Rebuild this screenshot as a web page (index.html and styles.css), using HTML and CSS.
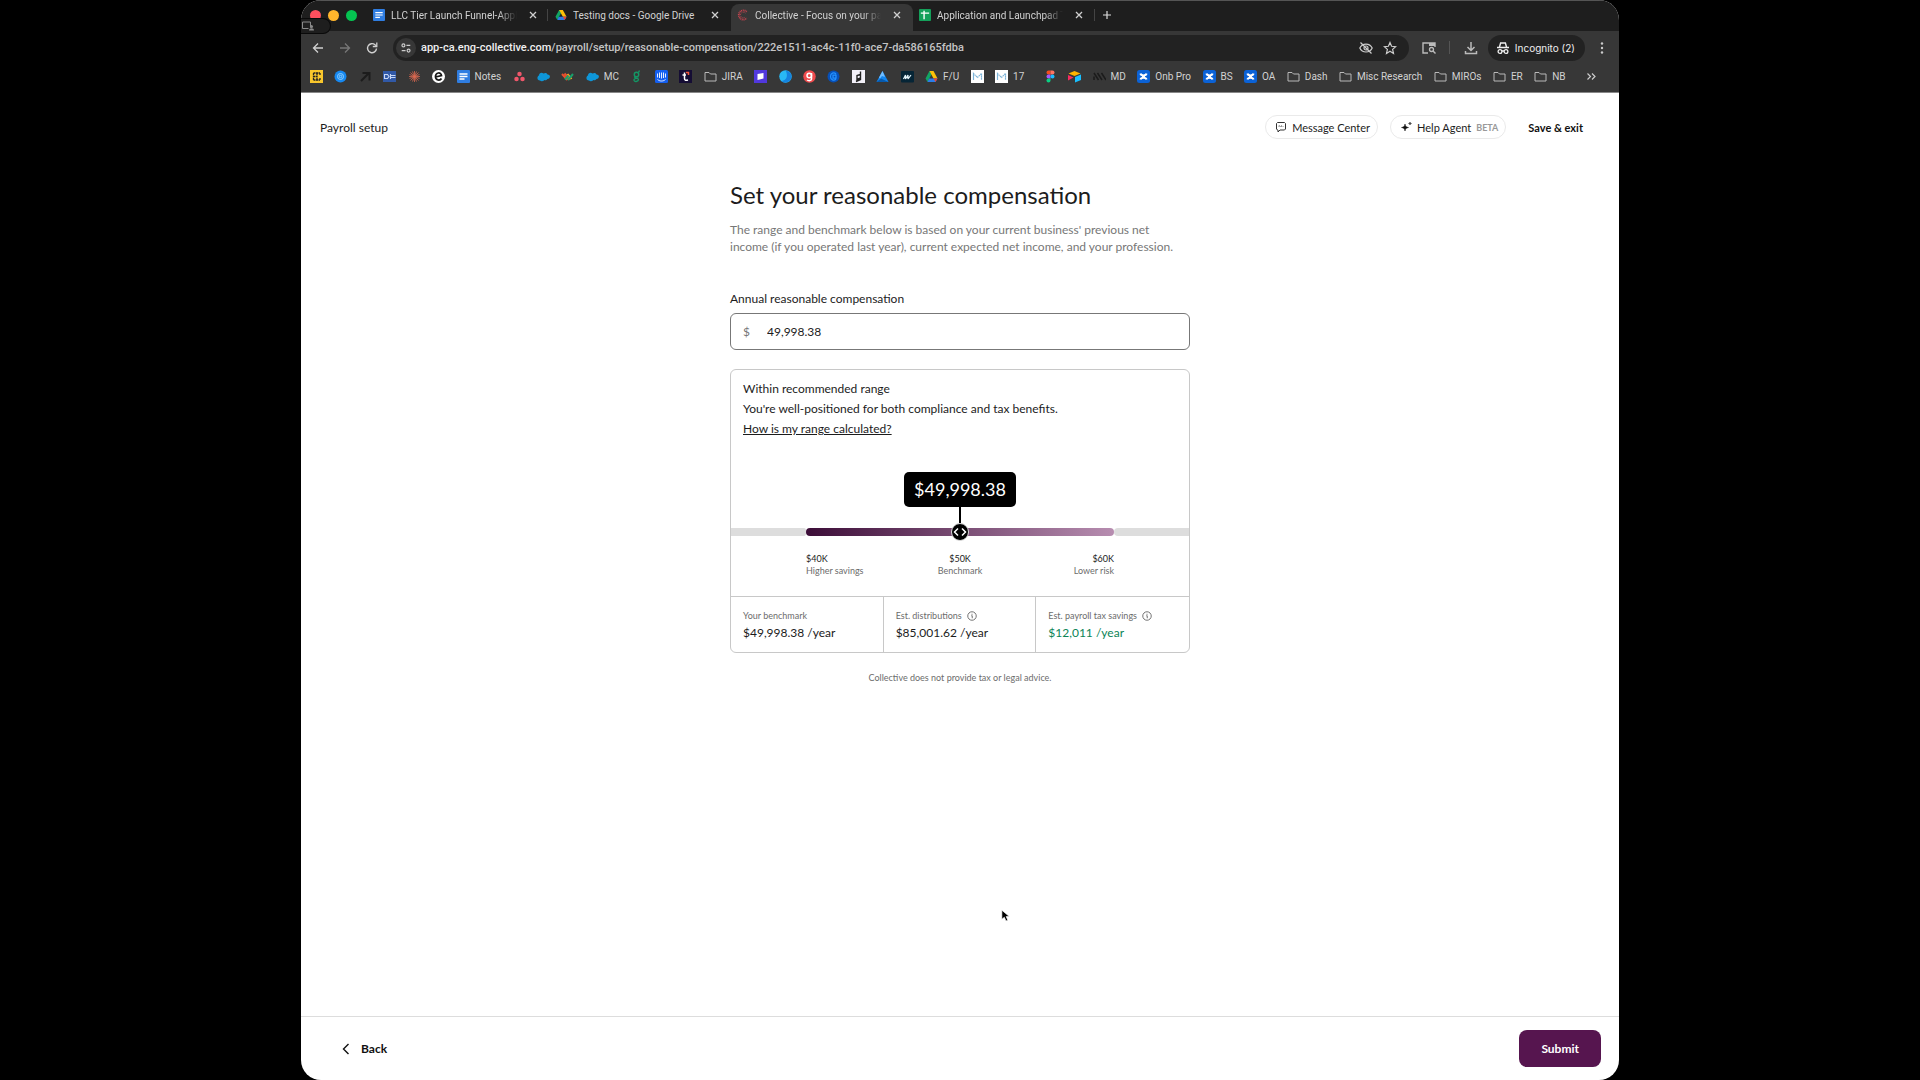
FILE: index.html
```html
<!DOCTYPE html>
<html lang="en">
<head>
  <meta charset="UTF-8" />
  <meta name="viewport" content="width=device-width, initial-scale=1.0" />
  <title>Collective - Focus on your passion</title>
  <link rel="stylesheet" href="styles.css">
</head>
<body>
  <!-- shared icons -->
  <svg class="sprite" aria-hidden="true">
    <symbol id="doc" viewBox="0 0 26 26"><rect width="26" height="26" rx="2" fill="#2f7de1"/><path d="M5 8h16M5 13h16M5 18h10" stroke="#fff" stroke-width="2.6"/></symbol>
    <symbol id="drive" viewBox="0 0 26 26"><path d="M9 2h8L9 16l-4 8-4-7z" fill="#12a463"/><path d="M9 2h8l8 15h-8z" fill="#ffc107"/><path d="M8 17h17l-4 7H5z" fill="#2b7de9"/><path d="M25 17l-4 7-4-7z" fill="#ea4335"/></symbol>
    <symbol id="close" viewBox="0 0 10 10"><path d="M2 2l6 6M8 2l-6 6" stroke="#d0d0d0" stroke-width="1.3"/></symbol>
    <symbol id="folder" viewBox="0 0 26 26"><path d="M2 22V5h8l3 3h11v14z" fill="none" stroke="#b9b9b9" stroke-width="2"/></symbol>
    <symbol id="cloud" viewBox="0 0 26 26"><path d="M6 21c-7 0-6-9-2-10 0-6 6-7 9-4 4-2 7-1 8 2 7 0 6 9 0 9-2 3-5 3-6 2-3 3-7 3-9 1z" fill="#0e96d8"/></symbol>
    <symbol id="miro" viewBox="0 0 26 26"><rect width="26" height="26" fill="#fff"/><path d="M5 20V7l8 8 8-8v13M5 7v13M21 7v13" fill="none" stroke="#7db4d8" stroke-width="2.4" stroke-dasharray="3 1"/></symbol>
    <symbol id="confl" viewBox="0 0 26 26"><rect width="26" height="26" rx="5" fill="#0b62d6"/><path d="M7 7c1 5 11 5 12 0M7 19c1-5 11-5 12 0" fill="none" stroke="#fff" stroke-width="4"/><path d="M10 10h6v6h-6z" fill="#fff"/></symbol>
    <symbol id="info" viewBox="0 0 20 20"><circle cx="10" cy="10" r="8.5" fill="none" stroke="#5c5c5c" stroke-width="1.7"/><path d="M8.500 9.500h2v5M10 5.500v2" fill="none" stroke="#5c5c5c" stroke-width="1.7"/></symbol>
  </svg>

  <div class="window">
    <div class="tab-strip">
      <div class="lights"><i class="red"></i><i class="yellow"></i><i class="green"></i></div>
      <div class="tab">
        <svg><use href="#doc"/></svg><span>LLC Tier Launch Funnel-Appli</span>
        <button aria-label="Close tab"><svg><use href="#close"/></svg></button>
      </div>
      <div class="tab first">
        <svg><use href="#drive"/></svg><span>Testing docs - Google Drive</span>
        <button aria-label="Close tab"><svg><use href="#close"/></svg></button>
      </div>
      <div class="tab active">
        <svg viewBox="0 0 26 26"><path d="M21 6a10 10 0 1 0 0 14" fill="none" stroke="#c5444f" stroke-width="4" stroke-dasharray="2 1.500"/><path d="M18 9a6 6 0 1 0 0 8" fill="none" stroke="#c5444f" stroke-width="2" stroke-dasharray="2 2"/></svg><span>Collective - Focus on your pas</span>
        <button aria-label="Close tab"><svg><use href="#close"/></svg></button>
      </div>
      <div class="tab last">
        <svg viewBox="0 0 26 26"><rect width="26" height="26" rx="2" fill="#14a05a"/><path d="M4 9h18M11 4v18" stroke="#fff" stroke-width="3"/></svg><span>Application and Launchpad Te</span>
        <button aria-label="Close tab"><svg><use href="#close"/></svg></button>
      </div>
      <button class="new-tab" aria-label="New tab"><svg viewBox="0 0 10 10"><path d="M5 1v8M1 5h8" stroke="#ddd" stroke-width="1.2"/></svg></button>
      <div class="share-pill">
        <svg viewBox="0 0 24 20"><path d="M1 2h16v11M1 2v13h12" fill="none" stroke="#8a8a8a" stroke-width="2"/><circle cx="19" cy="11" r="3" fill="#8a8a8a"/><path d="M14 19c0-6 10-6 10 0z" fill="#8a8a8a"/></svg>
      </div>
    </div>

    <div class="toolbar">
      <button aria-label="Back"><svg viewBox="0 0 14 14"><path d="M12 7H2.500M7 2.500L2.500 7 7 11.500" fill="none" stroke="#d0d0d0" stroke-width="1.300"/></svg></button>
      <button aria-label="Forward"><svg viewBox="0 0 14 14"><path d="M2 7h9.500M7 2.500L11.500 7 7 11.500" fill="none" stroke="#777" stroke-width="1.300"/></svg></button>
      <button aria-label="Reload"><svg viewBox="0 0 14 14"><path d="M11.500 7.500A4.500 4.500 0 1 1 10 3.800l1.500 1.200" fill="none" stroke="#d0d0d0" stroke-width="1.400"/><path d="M11.800 1.500v4H7.800" fill="none" stroke="#d0d0d0" stroke-width="1.300"/></svg></button>
      <div class="address">
        <button class="site-info" aria-label="Site information"><svg viewBox="0 0 14 14"><g fill="none" stroke="#ccc" stroke-width="1.400"><circle cx="4" cy="4" r="1.700"/><path d="M7.500 4H12M2 10h4.500"/><circle cx="10" cy="10" r="1.700"/></g></svg></button>
        <a class="url" href="#"><b>app-ca.eng-collective.com</b>/payroll/setup/reasonable-compensation/222e1511-ac4c-11f0-ace7-da586165fdba</a>
        <button aria-label="Tracking protection"><svg viewBox="0 0 14 14"><g fill="none" stroke="#ccc" stroke-width="1.200"><path d="M.800 7c2.500-5.300 9.900-5.300 12.400 0-2.500 5.300-9.900 5.300-12.400 0z"/><circle cx="7" cy="7" r="2"/><path d="M1.500 1.500l11 11"/></g></svg></button>
        <button aria-label="Bookmark"><svg viewBox="0 0 14 14"><path d="M7 1.500l1.600 3.800 4 .4-3 2.700.9 4L7 10.300l-3.500 2.100.9-4-3-2.700 4-.4z" fill="none" stroke="#ccc" stroke-width="1.200"/></svg></button>
      </div>
      <button class="panel-btn" aria-label="Search panel"><svg viewBox="0 0 14 14"><path d="M6 12H1V2h12v4" fill="none" stroke="#bbb" stroke-width="1.400"/><path d="M7 2h6v3H7z" fill="#bbb"/><circle cx="9.500" cy="8.500" r="2" fill="none" stroke="#bbb" stroke-width="1.300"/><path d="M11 10l2.500 2.500" stroke="#bbb" stroke-width="1.400"/></svg></button>
      <i class="divider"></i>
      <button aria-label="Downloads"><svg viewBox="0 0 14 14"><path d="M7 1v8M3.500 6L7 9.500 10.500 6M1.500 10v2.500h11V10" fill="none" stroke="#bbb" stroke-width="1.500"/></svg></button>
      <button class="incognito"><svg viewBox="0 0 14 14"><path d="M3.500 6L4.600 2h4.800l1.100 4M1 6.500h12" fill="none" stroke="#eee" stroke-width="1.400"/><g fill="none" stroke="#eee" stroke-width="1.300"><circle cx="4" cy="10.500" r="1.900"/><circle cx="10" cy="10.500" r="1.900"/><path d="M6 10h2"/></g></svg>Incognito (2)</button>
      <button class="menu" aria-label="Menu"><svg viewBox="0 0 14 14"><g fill="#ccc"><circle cx="7" cy="2.500" r="1.200"/><circle cx="7" cy="7" r="1.200"/><circle cx="7" cy="11.500" r="1.200"/></g></svg></button>
    </div>

    <nav class="bookmarks">
      <a href="#" aria-label="Bookmark"><svg viewBox="0 0 26 26"><rect width="26" height="26" fill="#f8c62c"/><path d="M7 6h13M7 20h13M7 6v14M14 6v14M7 13h8M20 6v4M20 16v4" stroke="#222" stroke-width="2.600" stroke-dasharray="4 1"/></svg></a>
      <a href="#" aria-label="Bookmark"><svg viewBox="0 0 26 26"><circle cx="13" cy="13" r="12" fill="#1688f0"/><g fill="none" stroke="#8fd0ff" stroke-width="2"><circle cx="13" cy="13" r="6"/><circle cx="13" cy="13" r="2.500"/></g></svg></a>
      <a href="#" aria-label="Bookmark"><svg viewBox="0 0 26 26"><path d="M4 22L20 6M7 6h14v15" fill="none" stroke="#1c1c1c" stroke-width="4"/></svg></a>
      <a href="#" aria-label="Bookmark"><svg viewBox="0 0 26 26"><rect y="2" width="26" height="22" fill="#3159a7"/><path d="M3 9h6l3 4-3 4H3zM15 8v10M15 11h10M15 15h10" fill="none" stroke="#c7d7f5" stroke-width="2.200"/></svg></a>
      <a href="#" aria-label="Bookmark"><svg viewBox="0 0 26 26"><path d="M13 2v22M2 13h22M5 5l16 16M21 5L5 21M9 3l8 20M17 3L9 23M3 9l20 8M3 17l20-8" stroke="#df6a50" stroke-width="1.500"/></svg></a>
      <a href="#" aria-label="Bookmark"><svg viewBox="0 0 26 26"><circle cx="13" cy="13" r="13" fill="#fff"/><path d="M7 14l12-3c-1-8-12-6-12 2s9 9 12 4" fill="none" stroke="#171717" stroke-width="3.500"/></svg></a>
      <a href="#"><svg><use href="#doc"/></svg>Notes</a>
      <a href="#" aria-label="Bookmark"><svg viewBox="0 0 26 26"><g fill="#f0576b"><circle cx="13" cy="8" r="4.500"/><circle cx="7" cy="18" r="4.500"/><circle cx="19" cy="18" r="4.500"/></g></svg></a>
      <a href="#" aria-label="Bookmark"><svg><use href="#cloud"/></svg></a>
      <a href="#" aria-label="Bookmark"><svg viewBox="0 0 26 26"><path d="M2 8l11 12M7 7l11 12" stroke="#e9502e" stroke-width="4"/><path d="M13 8l8 10" stroke="#f5a623" stroke-width="4"/><path d="M8 19l7-8M14 20l10-12" stroke="#18a06a" stroke-width="4"/></svg></a>
      <a href="#"><svg><use href="#cloud"/></svg>MC</a>
      <a href="#" aria-label="Bookmark"><svg viewBox="0 0 26 26"><g fill="none" stroke="#149665" stroke-width="2.800"><circle cx="13" cy="9" r="4.500"/><path d="M17 5l2-4M10 13c-4 3 7 2 7 6s-9 6-9 1 8-2 8-5"/></g></svg></a>
      <a href="#" aria-label="Bookmark"><svg viewBox="0 0 26 26"><rect width="26" height="26" rx="3" fill="#145ff0"/><path d="M5 7v8M9 5v11M13 5v12M17 5v11M21 7v8M5 19c5 4 11 4 16 0" fill="none" stroke="#fff" stroke-width="1.800"/></svg></a>
      <a href="#" aria-label="Bookmark"><svg viewBox="0 0 26 26"><rect width="26" height="26" fill="#150d34"/><path d="M11 5v12c0 4 3 4 7 3M7 10h7" fill="none" stroke="#fff" stroke-width="3"/><path d="M14 5h5v5" fill="none" stroke="#f0553b" stroke-width="3"/></svg></a>
      <a href="#"><svg><use href="#folder"/></svg>JIRA</a>
      <a href="#" aria-label="Bookmark"><svg viewBox="0 0 26 26"><rect width="26" height="26" fill="#5138dd"/><path d="M7 8l12-2v11l-12 3z" fill="#fff"/></svg></a>
      <a href="#" aria-label="Bookmark"><svg viewBox="0 0 26 26"><circle cx="13" cy="13" r="12.500" fill="#28b9f5"/><path d="M13 1a12 12 0 1 1-8 21c12-2 13-13 8-21z" fill="#1583df"/></svg></a>
      <a href="#" aria-label="Bookmark"><svg viewBox="0 0 26 26"><circle cx="13" cy="13" r="12.500" fill="#ef4b4d"/><g fill="none" stroke="#fff" stroke-width="3"><circle cx="12.500" cy="11" r="4.500"/><path d="M17 6v12c0 4-6 4-9 2"/></g></svg></a>
      <a href="#" aria-label="Bookmark"><svg viewBox="0 0 26 26"><circle cx="13" cy="13" r="12" fill="#0750b8"/><path d="M18 8c-4-4-11-2-11 5s7 9 11 5M12 10h6v6h-6z" fill="none" stroke="#2492ff" stroke-width="2.500"/></svg></a>
      <a href="#" aria-label="Bookmark"><svg viewBox="0 0 26 26"><rect width="26" height="26" fill="#f2f0f8"/><path d="M17 3v16l-9 4M17 9l-7 2v8l7-3" fill="none" stroke="#222" stroke-width="2.800"/></svg></a>
      <a href="#" aria-label="Bookmark"><svg viewBox="0 0 26 26"><path d="M13 2l12 22H1z" fill="#1385ee"/><path d="M13 2l5 12-6-2-4 5-2-2z" fill="#70bdff"/><path d="M1 24l9-7 15 7z" fill="#075aad"/></svg></a>
      <a href="#" aria-label="Bookmark"><svg viewBox="0 0 26 26"><rect y="2" width="26" height="23" rx="2" fill="#062536"/><path d="M5 18l4-8v8l5-8v8l6-8" fill="none" stroke="#e5f5fa" stroke-width="2.400" stroke-linejoin="bevel"/></svg></a>
      <a href="#"><svg><use href="#drive"/></svg>F/U</a>
      <a href="#" aria-label="Bookmark"><svg><use href="#miro"/></svg></a>
      <a href="#"><svg><use href="#miro"/></svg>17</a>
      <a href="#" class="spaced" aria-label="Bookmark"><svg viewBox="0 0 26 26"><path d="M13 1H9a4 4 0 0 0 0 8h4z" fill="#f24e1e"/><path d="M13 1h4a4 4 0 0 1 0 8h-4z" fill="#ff7262"/><path d="M13 9H9a4 4 0 0 0 0 8h4z" fill="#a259ff"/><circle cx="17" cy="13" r="4" fill="#1abcfe"/><path d="M13 17H9a4 4 0 1 0 4 4z" fill="#0acf83"/></svg></a>
      <a href="#" aria-label="Bookmark"><svg viewBox="0 0 26 26"><path d="M1 7l12-5 12 5-12 5z" fill="#fcb400"/><path d="M0 10l11 5-11 6z" fill="#f82b60"/><path d="M14 14l12-5v11l-12 5z" fill="#18bfff"/></svg></a>
      <a href="#"><svg viewBox="0 0 26 26"><path d="M2 6l9 14M9 6l9 14M17 6l9 14M2 13v7" stroke="#1b1b1b" stroke-width="3"/></svg>MD</a>
      <a href="#"><svg><use href="#confl"/></svg>Onb Pro</a>
      <a href="#"><svg><use href="#confl"/></svg>BS</a>
      <a href="#"><svg><use href="#confl"/></svg>OA</a>
      <a href="#"><svg><use href="#folder"/></svg>Dash</a>
      <a href="#"><svg><use href="#folder"/></svg>Misc Research</a>
      <a href="#"><svg><use href="#folder"/></svg>MIROs</a>
      <a href="#"><svg><use href="#folder"/></svg>ER</a>
      <a href="#"><svg><use href="#folder"/></svg>NB</a>
      <button class="more" aria-label="More bookmarks"><svg viewBox="0 0 26 26"><path d="M5 7l6 6-6 6M14 7l6 6-6 6" fill="none" stroke="#ccc" stroke-width="2.400"/></svg></button>
    </nav>

    <div class="page">
      <header class="page-header">
        <span class="page-name">Payroll setup</span>
        <button class="pill"><svg viewBox="0 0 24 24"><path d="M5 3h14l2 2v11l-2 2H10l-4 4v-4H5l-2-2V5z" fill="none" stroke="#333" stroke-width="2"/><path d="M8 12V9l3 2 2-2v3M16 10v2" fill="none" stroke="#777" stroke-width="1.600"/></svg>Message Center</button>
        <button class="pill help"><svg viewBox="0 0 24 24"><path d="M10 6c1 5 2 6 7 7-5 1-6 2-7 7-1-5-2-6-7-7 5-1 6-2 7-7zM20 2c0 2 1 3 3 3-2 0-3 1-3 3 0-2-1-3-3-3 2 0 3-1 3-3z" fill="#111" stroke="#111"/></svg>Help Agent <small>BETA</small></button>
        <button class="save">Save &amp; exit</button>
      </header>

      <main>
        <h1>Set your reasonable compensation</h1>
        <p class="intro">The range and benchmark below is based on your current business' previous net<br>income (if you operated last year), current expected net income, and your profession.</p>

        <label class="field-label" for="compensation">Annual reasonable compensation</label>
        <div class="field">
          <span>$</span>
          <input id="compensation" type="text" value="49,998.38">
        </div>

        <section class="card">
          <div class="card-text">
            <h2>Within recommended range</h2>
            <p>You're well-positioned for both compliance and tax benefits.</p>
            <a href="#">How is my range calculated?</a>
          </div>
          <div class="range">
            <output for="range">$49,998.38</output>
            <i class="stem"></i>
            <div class="track">
              <i></i><i class="recommended"></i><i></i>
              <input id="range" type="range" min="35000" max="65000" value="50000" aria-label="Annual compensation">
            </div>
            <div class="marks">
              <div><b>$40K</b>Higher savings</div>
              <div><b>$50K</b>Benchmark</div>
              <div><b>$60K</b>Lower risk</div>
            </div>
          </div>
          <dl class="stats">
            <div><dt>Your benchmark</dt><dd>$49,998.38 /year</dd></div>
            <div><dt>Est. distributions <svg><use href="#info"/></svg></dt><dd>$85,001.62 /year</dd></div>
            <div class="savings"><dt>Est. payroll tax savings <svg><use href="#info"/></svg></dt><dd>$12,011 /year</dd></div>
          </dl>
        </section>
        <p class="disclaimer">Collective does not provide tax or legal advice.</p>
      </main>

      <footer>
        <button class="back"><svg viewBox="0 0 12 12"><path d="M8.500 1L3.500 6l5 5" fill="none" stroke="#111" stroke-width="1.400"/></svg>Back</button>
        <button class="submit">Submit</button>
      </footer>
    </div>
  </div>

  <svg class="cursor" viewBox="0 0 12 16"><path d="M1 1v11l3-2.500 2 4.500 2.200-1-2-4.300H10z" fill="#000" stroke="#fff" stroke-width=".800"/></svg>
</body>
</html>
```
FILE: styles.css
```css
* {
  box-sizing: border-box;
}
html, body {
  height: 100%;
  margin: 0;
}
body {
  padding: 0 301px;
  background: #000;
  color: #1c1c1c;
  font-family: Lato, sans-serif;
  font-size: 12px;
}
button {
  display: flex;
  align-items: center;
  padding: 0;
  border: none;
  background: none;
  color: inherit;
  font: inherit;
}
svg {
  display: block;
  flex: none;
}
.sprite {
  position: absolute;
  width: 0;
  height: 0;
}
.window {
  display: flex;
  flex-direction: column;
  height: 100vh;
  overflow: hidden;
  border-radius: 20px;
  background: #fff;
}

/* browser chrome */
.tab-strip, .toolbar, .bookmarks {
  display: flex;
  align-items: center;
  flex: none;
  font-family: Roboto, sans-serif;
  color: #d2d2d2;
  font-size: 10px;
}
.tab-strip {
  position: relative;
  height: 31px;
  background: #1e1e1e;
  border-top: 1px solid #555;
}
.lights {
  display: flex;
  gap: 7px;
  width: 66px;
  padding: 0 0 2px 9px;
}
.lights i {
  width: 11px;
  height: 11px;
  border-radius: 50%;
}
.red { background: #ff4f5e; }
.yellow { background: #ffb52c; }
.green { background: #05c351; }
.tab {
  position: relative;
  display: flex;
  align-items: center;
  gap: 6px;
  width: 182px;
  height: 27px;
  padding: 0 6px 5px;
  border-radius: 8px 8px 0 0;
  align-self: flex-end;
}
.tab svg {
  width: 12px;
  height: 12px;
}
.tab span {
  flex: 1;
  overflow: hidden;
  white-space: nowrap;
  -webkit-mask-image: linear-gradient(to right, #000 85%, transparent);
  mask-image: linear-gradient(to right, #000 85%, transparent);
}
.tab.first span {
  -webkit-mask-image: none;
  mask-image: none;
}
.tab button {
  width: 20px;
  justify-content: center;
}
.tab button svg {
  width: 10px;
  height: 10px;
}
.tab.active {
  background: #373737;
}
.tab.first::before, .tab.last::after {
  content: "";
  position: absolute;
  top: 5px;
  left: -2px;
  width: 1px;
  height: 12px;
  background: #444;
}
.tab.last::after {
  left: auto;
  right: 0;
}
.new-tab {
  padding: 0 0 2px 7px;
}
.new-tab svg {
  width: 10px;
  height: 10px;
}
.share-pill {
  position: absolute;
  top: 17px;
  left: 0;
  width: 30px;
  height: 16px;
  padding: 2px 0 0 1px;
  border: 1px solid #0a0a0a;
  border-left: none;
  border-radius: 0 8px 8px 0;
  background: #1e1e1e;
}
.share-pill svg {
  width: 12px;
  height: 10px;
}
.toolbar {
  height: 33px;
  padding: 0 10px;
  background: #373737;
}
.toolbar button svg {
  width: 14px;
  height: 14px;
}
.toolbar > button:nth-child(-n+3) {
  width: 27px;
}
.address {
  display: flex;
  align-items: center;
  flex: 1;
  gap: 10px;
  height: 26px;
  margin-left: 1px;
  padding: 0 12px 0 3px;
  border-radius: 13px;
  background: #222;
}
.site-info {
  width: 20px;
  height: 20px;
  justify-content: center;
  border-radius: 50%;
  background: #373737;
}
.toolbar .site-info svg {
  width: 12px;
  height: 12px;
}
.url {
  flex: 1;
  margin-left: -5px;
  color: #c4c4c4;
  font-size: 11px;
  font-weight: 500;
  text-decoration: none;
  white-space: nowrap;
}
.url b {
  color: #f0f0f0;
  font-weight: 500;
}
.panel-btn {
  margin: 0 13px;
}
.divider {
  width: 1px;
  height: 13px;
  margin-right: 14px;
  background: #555;
}
.incognito {
  gap: 5px;
  height: 26px;
  margin: 0 10px;
  padding: 0 10px 0 8px;
  border-radius: 13px;
  background: #222;
  color: #eee;
  font-family: Inter, sans-serif;
}
.bookmarks {
  justify-content: space-between;
  height: 29px;
  padding: 0 21px 3px 9px;
  background: #373737;
  border-bottom: 1px solid #888;
}
.bookmarks a {
  display: flex;
  align-items: center;
  gap: 5px;
  color: #d2d2d2;
  text-decoration: none;
  white-space: nowrap;
}
.bookmarks svg {
  width: 13px;
  height: 13px;
}
.bookmarks .spaced {
  margin-left: 8px;
}
.bookmarks .more {
  margin-left: 8px;
}

/* app page */
.page {
  display: flex;
  flex-direction: column;
  flex: 1;
}
.page-header {
  display: flex;
  align-items: center;
  gap: 12px;
  padding: 22px 36px 0 19px;
  font-size: 11px;
}
.page-name {
  flex: 1;
  font-size: 12px;
}
.pill {
  gap: 5px;
  height: 24px;
  padding: 0 7px 0 9px;
  border: 1px solid #eaeaea;
  border-radius: 12px;
}
.pill svg {
  width: 12px;
  height: 12px;
}
.pill small {
  color: #999;
  font-size: 9px;
  font-weight: 700;
}
.save {
  margin-left: 10px;
  color: #111;
  font-weight: 700;
}
main {
  flex: 1;
  width: 460px;
  margin: 0 auto;
  padding-top: 40px;
}
h1 {
  margin: 0 0 10px;
  font-size: 24px;
  font-weight: 400;
  line-height: 32px;
}
.intro {
  margin: 0 0 35px;
  color: #777;
  line-height: 17px;
  white-space: nowrap;
}
.field-label {
  display: block;
  margin-bottom: 5px;
  line-height: 18px;
}
.field {
  display: flex;
  align-items: center;
  height: 37px;
  padding: 0 12px;
  border: 1px solid #777;
  border-radius: 6px;
}
.field span {
  width: 24px;
  color: #777;
}
.field input {
  flex: 1;
  padding: 0;
  border: none;
  outline: none;
  background: none;
  color: #1c1c1c;
  font: inherit;
}
.card {
  margin-top: 19px;
  border: 1px solid #c8c8c8;
  border-radius: 6px;
}
.card-text {
  padding: 9px 12px 0;
  line-height: 20px;
}
.card-text h2, .card-text p {
  margin: 0;
  font-size: 12px;
  font-weight: 400;
}
.card-text a {
  color: #1c1c1c;
}
.range {
  display: flex;
  flex-direction: column;
  align-items: center;
  padding: 33px 0 19px;
}
.range output {
  padding: 0 10px;
  border-radius: 5px;
  background: #000;
  color: #fff;
  font-size: 18px;
  line-height: 35px;
}
.stem {
  width: 2px;
  height: 21px;
  background: #000;
}
.track {
  position: relative;
  display: grid;
  grid-template-columns: 75fr 308fr 75fr;
  align-self: stretch;
  height: 8px;
}
.track i {
  background: #ddd;
}
.track i:first-child {
  border-radius: 0 2px 2px 0;
}
.track i:nth-child(3) {
  border-radius: 4px 0 0 4px;
}
.track .recommended {
  border-radius: 4px;
  background: linear-gradient(to right, #3c0d38, #b78db0);
}
.track input {
  position: absolute;
  inset: -5px 0;
  width: 100%;
  margin: 0;
  background: none;
  -webkit-appearance: none;
  appearance: none;
}
.track input::-webkit-slider-thumb {
  -webkit-appearance: none;
  width: 18px;
  height: 18px;
  border: 1px solid #ddd;
  border-radius: 50%;
  background: #000 url("data:image/svg+xml,%3Csvg xmlns='http://www.w3.org/2000/svg' viewBox='0 0 16 16'%3E%3Cpath d='M6 4.500L2.500 8 6 11.500M10 4.500L13.500 8 10 11.500' fill='none' stroke='white' stroke-width='1.500'/%3E%3C/svg%3E");
}
.marks {
  display: flex;
  width: 308px;
  margin-top: 17px;
  color: #6c6c6c;
  font-size: 9px;
  line-height: 12px;
}
.marks div {
  flex: 1;
  text-align: center;
}
.marks div:first-child {
  text-align: left;
}
.marks div:last-child {
  text-align: right;
}
.marks b {
  display: block;
  color: #1c1c1c;
  font-weight: 400;
}
.stats {
  display: grid;
  grid-template-columns: repeat(3, 1fr);
  margin: 0;
  border-top: 1px solid #c8c8c8;
}
.stats div {
  padding: 11px 12px;
  border-right: 1px solid #c8c8c8;
}
.stats div:last-child {
  border-right: none;
}
.stats dt {
  display: flex;
  align-items: center;
  gap: 5px;
  color: #6c6c6c;
  font-size: 9px;
  line-height: 16px;
}
.stats svg {
  width: 10px;
  height: 10px;
}
.stats dd {
  margin: 0;
  line-height: 17px;
}
.stats .savings dd {
  color: #0b8457;
}
.disclaimer {
  margin: 17px 0 0;
  color: #6c6c6c;
  font-size: 9px;
  line-height: 16px;
  text-align: center;
}
footer {
  display: flex;
  align-items: center;
  justify-content: space-between;
  height: 64px;
  padding: 0 18px 0 39px;
  border-top: 1px solid #ddd;
  font-weight: 700;
  color: #111;
}
.back {
  gap: 9px;
}
.back svg {
  width: 12px;
  height: 12px;
}
.submit {
  height: 37px;
  padding: 0 22px;
  border-radius: 8px;
  background: #56154f;
  color: #fff;
}
.cursor {
  position: absolute;
  top: 909px;
  left: 1001px;
  width: 10px;
  height: 14px;
}
```
